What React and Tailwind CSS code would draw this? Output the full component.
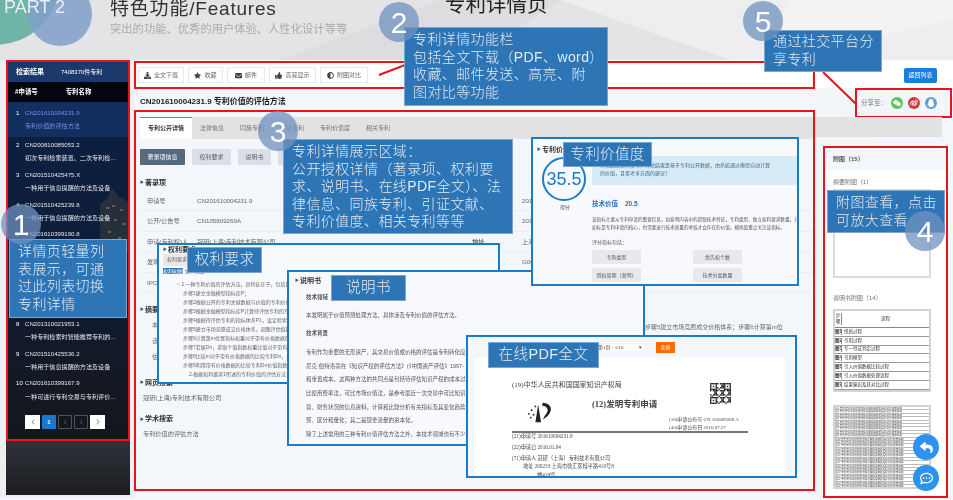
import React from "react";
import { FaDownload, FaStar, FaEnvelope, FaThumbsUp, FaAdjust, FaReply, FaRegCommentDots, FaWeixin, FaWeibo, FaQq, FaChevronLeft, FaChevronRight } from "react-icons/fa";

const results = [
    { n: 1, id: "CN201610004231.9", title: "专利价值的评估方法", active: true },
    { n: 2, id: "CN200810085053.2", title: "初次专利检索装置、二次专利检...", },
    { n: 3, id: "CN201510425475.X", title: "一种用于信息提醒的方法及设备" },
    { n: 4, id: "CN201510425239.8", title: "一种用于信息提醒的方法及设备" },
    { n: 5, id: "CN201610399190.8", title: "一种专利价值评估的方法和系统" },
    { n: 6, id: "CN201510425001.3", title: "一种用于信息提醒的方法及设备" },
    { n: 7, id: "CN201310021950.4", title: "一种专利检索方法及装置" },
    { n: 8, id: "CN201310021953.1", title: "一种专利检索时智能推荐专利的..." },
    { n: 9, id: "CN201510425536.2", title: "一种用于信息提醒的方法及设备" },
    { n: 10, id: "CN201610399167.9", title: "一种可进行专利交易与专利评价..." },
];

const tools = [
    { icon: FaDownload, label: "全文下载", w: "w-[46px]" },
    { icon: FaStar, label: "收藏", w: "w-[35px]" },
    { icon: FaEnvelope, label: "邮件", w: "w-[38px]" },
    { icon: FaThumbsUp, label: "高亮显示", w: "w-[47px]" },
    { icon: FaAdjust, label: "附图对比", w: "w-[48px]" },
];

const tabs = ["法律信息", "同族专利", "引证专利", "专利价值度", "相关专利"];

const biblio = [
    ["申请号", "CN201610004231.9", "", "2016.01.04"],
    ["公开/公告号", "CN105809269A", "", "2016.07.27"],
    ["申请(专利权)人", "冠研(上海)专利技术有限公司", "地址", "上海市徐汇区桂平路"],
    ["发明人", "王磊;李明", "", "G06Q 50/18"],
    ["IPC分类号", "G06Q 10/06", "", ""],
];

const claims = [
    "步骤1建立金融模型指标库P；",
    "步骤2根据公开的专利文献数据与价值的专利价值金额P建立专利价值评估模型；",
    "步骤3根据金融模型指标库P计算待评估专利的专利价值评分；",
    "步骤4根据待评估专利的指标体系P1，设定检索条件，从专利数据库中检索；",
    "步骤5建立市场竞愿成交价格体系，调整评估值指标权重分析比较；",
    "步骤6计算第m位置指标权重对于带有价格数据的比较专利Dn的值；",
    "步骤7若属Dn，求取个值指数权重比值对于带有价格数据的比较；",
    "步骤8比较m对于带有价格数据的比较专利Dn，找到有值指标；",
    "步骤9利用带有价格数据的比较专利Dn价值指数据为Dn，与值；",
];

const specLines = [
    "专利作为重要的无形资产，其交易价值或价格的评估是专利转化应用中的关键",
    "尼克·伯特洛蒂在《知识产权的评估方法》(《中国资产评估》1997-",
    "和重置成本。这两种方法的共同点是包括待评估知识产权的成本过程中",
    "比使用费率法，可比市场价值法，是参考最近一次交易中可比知识产权",
    "营、财务状况的信息资料，计算和比较分析有关指标及其变化趋势",
    "预、区分和量化；其二是现金流量的资本化。",
    "除了上述常用的三种专利价值评估方法之外，本技术领域也有不少研究",
];

const figureRows = ["纸质过程", "引用过程", "专一特征判定过程", "引用模型", "引入价值数据比较过程", "引入价值数据处理流程", "结果输出及其对比过程"];

// rough qr picture: finder squares in three corners, noise elsewhere
const qrOn = (x, y) => {
    const inFinder = (fx, fy) => x >= fx && x < fx + 5 && y >= fy && y < fy + 5;
    if (inFinder(0, 0) || inFinder(10, 0) || inFinder(0, 10)) {
        const lx = x % 10;
        const ly = y % 10;
        return lx === 0 || lx === 4 || ly === 0 || ly === 4 || (lx === 2 && ly === 2);
    }
    return (x * x * 7 + y * y * 13 + x * y * 5 + x + y) % 5 < 2;
};
const qrCells = [];
for (let y = 0; y < 15; y++) {
    for (let x = 0; x < 15; x++) {
        if (qrOn(x, y)) qrCells.push([x, y]);
    }
}

// blue box that explains a region of the slide
const Callout = ({ className, children }) => (
    <div className={`absolute z-30 whitespace-nowrap border border-[#7ba6d4] bg-[#2e75b6] font-light tracking-[0.4px] text-[#e3ebf4] ${className}`}>
        {children}
    </div>
);

const NumberDot = ({ className, children }) => (
    <div className={`absolute z-40 flex h-[40px] w-[40px] items-center justify-center rounded-full bg-[#6f92bf]/75 text-[30px] font-light text-white ${className}`}>
        {children}
    </div>
);

const Heading = ({ children, className = "" }) => (
    <div className={`flex items-center gap-[1px] text-[7px] font-bold text-[#333] ${className}`}>
        <span className="text-[4px] text-[#35518a]">▶</span>
        {children}
    </div>
);

const Sidebar = () => (
    <aside className="ml-[6px] h-[435px] w-[124px] shrink-0 bg-gradient-to-b from-[#202833] to-[#17191d]">
        <div className="relative h-[381px] overflow-hidden border-2 border-[#e8141c] bg-gradient-to-b from-[#0c2147] via-[#0e1d38] to-[#14161b] text-white">
            <svg className="absolute right-0 top-[120px] h-[70px] w-[34px]" viewBox="0 0 34 70">
                <path d="M6 70 L6 22 L14 16 L18 6 L24 14 L34 20 L34 70 Z" fill="#26303c" />
                <path d="M12 26 h3 M18 24 h3 M26 28 h3 M10 36 h3 M20 38 h3 M28 42 h3 M14 50 h3 M24 56 h3" stroke="#a98d4e" strokeWidth="1" />
            </svg>
            <div className="relative flex h-[20px] items-center gap-[17px] bg-[#1b3a6b] pl-[8px] text-[6px]">
                <span className="text-[7px] font-bold">检索结果</span>
                <span>7408370件专利</span>
            </div>
            <div className="relative flex h-[20px] items-center gap-[28px] bg-[#03060e] pl-[7px] text-[6.4px] font-bold">
                <span>#申请号</span>
                <span>专利名称</span>
            </div>
            {results.map((r) => (
                <div
                    key={r.n}
                    className={`relative flex gap-[3px] pl-[8px] text-[6.1px] ${r.active ? "h-[35px] bg-[#12305f] pt-[6px]" : "h-[29.8px] pt-[3px]"}`}
                >
                    <span className="w-[6px]">{r.n}</span>
                    <div className={`flex flex-col gap-[4px] ${r.active ? "text-[#7a8cf0]" : "text-[#e4e7ec]"}`}>
                        <span className="whitespace-nowrap">{r.id}</span>
                        <span className="whitespace-nowrap">{r.title}</span>
                    </div>
                </div>
            ))}
            <div className="relative mt-[10px] flex justify-center gap-[2px] pr-[6px] text-[6px]">
                <span className="flex h-[14px] w-[15px] items-center justify-center bg-white text-[#999]"><FaChevronLeft /></span>
                <span className="flex h-[14px] w-[14px] items-center justify-center rounded-[1px] bg-[#1a78d0] font-bold">1</span>
                <span className="flex h-[14px] w-[14px] items-center justify-center rounded-[1px] border border-[#555] text-[#555]">2</span>
                <span className="flex h-[14px] w-[14px] items-center justify-center rounded-[1px] border border-[#555] text-[#555]">3</span>
                <span className="flex h-[14px] w-[15px] items-center justify-center bg-white text-[#999]"><FaChevronRight /></span>
            </div>
        </div>
        <div className="h-[54px] bg-gradient-to-b from-[#2f3238] to-[#1b1d21]" />
    </aside>
);

const Toolbar = () => (
    <div className="flex h-[28px] items-center gap-[4px] border-2 border-[#e8141c] pl-[2px]">
        {tools.map((t) => (
            <div key={t.label} className={`flex h-[16px] items-center justify-center gap-[3px] border border-[#e6e8ec] bg-white text-[6px] text-[#666] ${t.w}`}>
                <t.icon className="text-[7px] text-[#444]" />
                {t.label}
            </div>
        ))}
    </div>
);

const MainPanel = () => (
    <section className="h-[381px] overflow-hidden border-2 border-[#e8141c] bg-[#f3f6fa] pl-[4px] text-[6px] text-[#666]">
        <div className="mt-[5px] flex h-[22px] items-center bg-[#e2e2e2] text-[#777]">
            <div className="flex h-full w-[52px] items-center justify-center border-t border-[#3b8fe6] bg-white font-bold text-[#333]">专利公开详情</div>
            {tabs.map((t) => (
                <span key={t} className="mx-[8px]">{t}</span>
            ))}
        </div>
        <div className="mt-[10px] flex gap-[7px]">
            <span className="flex h-[16px] w-[45px] items-center justify-center rounded-[1px] bg-[#56697f] text-white">著录项信息</span>
            <span className="flex h-[16px] w-[39px] items-center justify-center rounded-[1px] bg-[#dadee6]">权利要求</span>
            <span className="flex h-[16px] w-[33px] items-center justify-center rounded-[1px] bg-[#dadee6]">说明书</span>
            <span className="flex h-[16px] w-[40px] items-center justify-center rounded-[1px] bg-[#dadee6]">全文</span>
        </div>
        <Heading className="mt-[13px]">著录项</Heading>
        <div className="mt-[2px]">
            {biblio.map((row) => (
                <div key={row[0]} className="flex h-[20.5px] items-center border-b border-[#e9edf2] pl-[7px] text-[6.2px]">
                    <span className="w-[50px] whitespace-nowrap">{row[0]}</span>
                    <span className="w-[275px] whitespace-nowrap">{row[1]}</span>
                    <span className="w-[50px] font-bold">{row[2]}</span>
                    <span className="whitespace-nowrap">{row[3]}</span>
                </div>
            ))}
        </div>
        <Heading className="mt-[12px]">摘要</Heading>
        <div className="mt-[5px] flex flex-col gap-[7px] pl-[12px]">
            <span>本发明公开了一种专利价值的评估方法</span>
            <span>该方法包括建立金融模型指标库P</span>
            <span>估值模型的专利价值计算</span>
        </div>
        <Heading className="mt-[16px]">网页搜索</Heading>
        <p className="mt-[5px] pl-[3px] text-[6.2px]">冠研(上海)专利技术有限公司</p>
        <Heading className="mt-[12px]">学术搜索</Heading>
        <p className="mt-[4px] pl-[3px] text-[6.2px]">专利价值的评估方法</p>
    </section>
);

const RightColumn = () => (
    <div className="min-w-0 flex-1 text-[6px] text-[#777]">
        <div className="flex h-[28px] items-center justify-end bg-white pr-[16px] pt-[3px]">
            <span className="flex h-[15px] w-[33px] items-center justify-center rounded-[2px] bg-[#1a7ee0] text-white">返回列表</span>
        </div>
        <div className="ml-[40px] flex h-[30px] w-[97px] items-center gap-[4px] border-2 border-[#e8141c] pl-[4px] text-[6.5px]">
            <span className="whitespace-nowrap">分享至：</span>
            <span className="flex h-[12px] w-[12px] shrink-0 items-center justify-center rounded-full bg-[#5cc45c] text-[8px] text-white"><FaWeixin /></span>
            <span className="ml-[1px] flex h-[12px] w-[12px] shrink-0 items-center justify-center rounded-full bg-[#cc3b3b] text-[8px] text-white"><FaWeibo /></span>
            <span className="ml-[1px] flex h-[12px] w-[12px] shrink-0 items-center justify-center rounded-full bg-[#5a9fe0] text-[8px] text-white"><FaQq /></span>
        </div>
        <div className="-mt-px h-[20px] w-[127px] bg-[#e2e2e2]" />
        <div className="ml-[8px] mt-[9px] h-[352px] w-[125px] border-2 border-[#e8141c] bg-white">
            <div className="flex h-[22px] items-center bg-[#f3f6fa] pl-[8px] font-bold text-[#555]">附图（15）</div>
            <div className="pl-[8px] pr-[15px]">
                <p className="mt-[8px] leading-[9px]">摘要附图（1）</p>
                <div className="mt-[2px] h-[89px] border-2 border-[#dcdcdc]" />
                <p className="mt-[16px] leading-[9px]">说明书附图（14）</p>
                <div className="mt-[6px] flex h-[83px] flex-col overflow-hidden border-2 border-[#d4d4d4] text-[4.5px] leading-[6px] text-[#333]">
                    <div className="flex h-[17px] shrink-0 items-center border-b border-[#888]">
                        <span className="w-[7px] border-r border-[#888] text-center">步骤</span>
                        <span className="flex-1 text-center">流程</span>
                    </div>
                    {figureRows.map((r, i) => (
                        <div key={r} className="flex h-[8.8px] shrink-0 items-center overflow-hidden whitespace-nowrap border-b border-[#999]">
                            <span className="w-[7px] shrink-0 overflow-hidden border-r border-[#888] font-bold">图{i + 1}</span>
                            <span className="pl-[2px]">{r}</span>
                        </div>
                    ))}
                </div>
                <div className="mt-[13px] flex h-[84px] flex-col overflow-hidden border-2 border-[#d4d4d4]">
                    {Array.from({ length: 24 }, (_, i) => (
                        <div key={i} className="h-[3.4px] shrink-0 overflow-hidden whitespace-nowrap border-b border-[#bbb] text-[2.6px] leading-[3px] text-[#444]">
                            图{i + 1} 专利价值评估处理流程及其相关数据指标对比结果说明
                        </div>
                    ))}
                </div>
            </div>
        </div>
    </div>
);

const ClaimsWindow = () => (
    <div className="absolute left-[157px] top-[243px] z-10 h-[141px] w-[343px] overflow-hidden border-2 border-[#1a7cc8] bg-[#f7f9fc] pl-[4px] text-[5px] leading-[5px] text-[#666]">
        <Heading className="mt-[2px] text-[5px]">权利要求</Heading>
        <div className="mt-[2px] h-[12px] w-[60px] bg-[#e8e8e8] pl-[4px] pt-[3px]">权利要求树形</div>
        <p className="mt-[3px]"><span className="bg-[#2e75b6] text-white">权利树图</span> 文本视图</p>
        <div className="ml-[14px] mt-[8px] flex flex-col gap-[4px] whitespace-nowrap">
            <p>○ 1.一种专利价值的评估方法，其特征在于，包括如下步骤：</p>
            {claims.map((c) => (
                <p key={c} className="pl-[6px]">{c}</p>
            ))}
            <p className="pl-[12px]">2.根据权利要求1所述的专利价值的评估方法，其特征在于，</p>
        </div>
    </div>
);

const SpecWindow = () => (
    <div className="absolute left-[287px] top-[270px] z-10 h-[176px] w-[358px] overflow-hidden border-2 border-[#1a7cc8] bg-[#f7f9fc] pl-[6px] text-[5.5px] leading-[8px] text-[#555]">
        <Heading className="mt-[5px]">说明书</Heading>
        <p className="mt-[8px] pl-[11px] font-bold">技术领域</p>
        <p className="mt-[10px] pl-[11px]">本发明属于价值预测处理方法，具体涉及专利价值的评估方法。</p>
        <p className="mt-[10px] pl-[11px] font-bold">技术背景</p>
        <div className="mt-[11px] flex flex-col gap-[5.7px] whitespace-nowrap pl-[11px]">
            {specLines.map((l) => (
                <p key={l}>{l}</p>
            ))}
        </div>
    </div>
);

const ValueWindow = () => (
    <div className="absolute left-[531px] top-[137px] z-20 h-[149px] w-[268px] overflow-hidden border-2 border-[#1a7cc8] bg-[#f7f9fc] text-[5px] text-[#555]">
        <Heading className="ml-[4px] mt-[6px] text-[5.5px]">专利价值度</Heading>
        <div className="absolute left-[9px] top-[18px] flex h-[44px] w-[44px] items-center justify-center rounded-full border-2 border-[#1a7cc8] text-[18px] text-[#1a7cc8]">35.5</div>
        <span className="absolute left-[27px] top-[65px]">得分</span>
        <div className="absolute left-[59px] top-[17px] h-[29px] w-[207px] whitespace-nowrap bg-[#d6ebf5] px-[8px] pt-[5px] leading-[8px] text-[#3d6b94]">
            评估结果仅供参考，评估结果是基于专利公开数据，由系统通过模型自动计算
            <br />
            的价值，且参考多方面的建议！
        </div>
        <div className="absolute left-[59px] top-[60px] flex gap-[7px] text-[6.5px] font-bold text-[#2a72c4]">
            <span>技术价值</span>
            <span>20.5</span>
        </div>
        <p className="absolute left-[59px] top-[77px] whitespace-nowrap leading-[8px] text-[4.6px]">
            该指标主要从专利申请的重要信息，如发明内容中的提取技术特征，专利类型、独立权利要求数量，共
            <br />
            如标是专利申请的核心，也需要进行技术质量的考核才会存在的价值，模拟值重点关注该指标。
        </p>
        <p className="absolute left-[59px] top-[100px]">评分指标包括：</p>
        <div className="absolute left-[59px] top-[111px] grid grid-cols-[49px_49px] gap-x-[52px] gap-y-[4px] text-center leading-[14px]">
            <span className="bg-[#e8e9ec]">专利类型</span>
            <span className="bg-[#e8e9ec]">优先权个数</span>
            <span className="bg-[#e8e9ec]">授权周期（发明）</span>
            <span className="bg-[#e8e9ec]">技术分类数量</span>
        </div>
    </div>
);

const PdfWindow = () => (
    <div className="absolute left-[466px] top-[335px] z-20 h-[143px] w-[331px] overflow-hidden border-2 border-[#1a7cc8] bg-[#f4f7fb] font-['Liberation_Serif','Noto_Sans_CJK_SC',serif] text-[#444]">
        <div className="flex h-[21px] items-center justify-end gap-[12px] pr-[120px] text-[5px]">
            <span className="flex w-[48px] justify-between bg-white px-[2px]">第1页 - 1/16 <span>▾</span></span>
            <span className="flex h-[11px] w-[19px] items-center justify-center bg-[#ff6a00] text-white">全屏</span>
        </div>
        <div className="relative ml-[7px] h-[120px] w-[310px] bg-white">
            <p className="absolute left-[37px] top-[22px] text-[7px]">(19)中华人民共和国国家知识产权局</p>
            <svg className="absolute left-[52px] top-[42px] h-[24px] w-[28px]" viewBox="0 0 30 24" fill="#222">
                <path d="M12 4 L15 23 L9 23 Z" />
                <path d="M17 2 C28 3 29 13 17 20 L19 16 C24 11 23 6 16 5 Z" />
                <circle cx="2" cy="14" r="1" /><circle cx="5" cy="10" r="1" /><circle cx="7" cy="15" r="1" /><circle cx="9" cy="6" r="1" /><circle cx="4" cy="18" r="1" />
            </svg>
            <p className="absolute left-[117px] top-[40px] text-[8.5px] font-bold">(12)发明专利申请</p>
            <svg className="absolute left-[235px] top-[25px] h-[21px] w-[21px]" viewBox="0 0 15 15" fill="#222">
                {qrCells.map(([x, y]) => <rect key={`${x}-${y}`} x={x} y={y} width="1" height="1" />)}
            </svg>
            <p className="absolute left-[194px] top-[58px] whitespace-nowrap text-[5px]">(10)申请公布号 CN 105809269 A</p>
            <p className="absolute left-[194px] top-[66px] whitespace-nowrap text-[5px]">(43)申请公布日 2016.07.27</p>
            <div className="absolute left-[37px] top-[73px] h-[1.5px] w-[236px] bg-[#777]" />
            <div className="absolute left-[37px] top-[75px] flex flex-col gap-[3.2px] whitespace-nowrap text-[5.2px]">
                <p>(21)申请号 201610004231.9</p>
                <p>(22)申请日 2016.01.04</p>
                <p>(71)申请人 冠研（上海）专利技术有限公司</p>
            </div>
            <p className="absolute left-[48px] top-[105px] whitespace-nowrap text-[5.2px]">地址 200233 上海市徐汇区桂平路410号8</p>
            <p className="absolute left-[62px] top-[114px] whitespace-nowrap text-[5.2px]">幢418室</p>
        </div>
    </div>
);

const App = () => {
    return (
        <div className="relative h-[500px] w-[953px] overflow-hidden bg-[#f3f6fa] font-['Liberation_Sans','Noto_Sans_CJK_SC',sans-serif] blur-[0.4px]">
            <header className="relative h-[60px] overflow-hidden bg-[#e4e3e5]">
                <svg className="absolute inset-0 h-full w-full" viewBox="0 0 953 60">
                    <polygon points="560,0 953,0 953,60 730,60" fill="#eeedef" />
                    <polygon points="280,60 440,0 560,0 470,60" fill="#dedcdf" />
                    <polygon points="760,60 790,0 953,0 953,20" fill="#f3f3f4" />
                </svg>
                <div className="absolute -left-[70px] -top-[85px] h-[130px] w-[130px] rounded-full bg-[#6fb4a6]" />
                <div className="absolute left-[28px] -top-[18px] h-[64px] w-[64px] rounded-full bg-[#7f9fc9]/85" />
                <span className="absolute left-[4px] -top-[6px] text-[18px] font-light text-[#e9eef2]">PART 2</span>
                <div className="relative pl-[110px]">
                    <h1 className="-mt-[4px] whitespace-nowrap text-[19px] font-normal leading-[26px] tracking-[0.8px] text-[#333]">特色功能/Features</h1>
                    <p className="whitespace-nowrap text-[11.3px] leading-[14px] text-[#aaa]">突出的功能、优秀的用户体验、人性化设计等等</p>
                </div>
                <span className="absolute left-[445px] -top-[9px] whitespace-nowrap text-[20.5px] leading-[28px] text-[#222]">专利详情页</span>
            </header>

            <div className="flex bg-gradient-to-r from-[#eeeeee] to-[#f3f6fa]">
                <Sidebar />
                <div className="ml-[4px] w-[681px] shrink-0 bg-[#f3f6fa]">
                    <div className="bg-white pt-px"><Toolbar /></div>
                    <h2 className="h-[21px] whitespace-nowrap pl-[6px] pt-[8px] text-[8px] font-bold leading-[10px] text-[#222]">
                        CN201610004231.9 专利价值的评估方法
                    </h2>
                    <MainPanel />
                </div>
                <RightColumn />
            </div>

            {/* windows and callouts that lie over the page */}
            <ClaimsWindow />
            <SpecWindow />
            <ValueWindow />
            <PdfWindow />

            <p className="absolute left-[645px] top-[323px] whitespace-nowrap text-[6px] text-[#666]">步骤5建立市场竞愿成交价格体系；步骤6计算第m位</p>

            <svg className="pointer-events-none absolute inset-0 z-30 h-[500px] w-[953px]">
                <line x1="379" y1="75" x2="405" y2="65" stroke="#e8141c" strokeWidth="2" />
                <line x1="823" y1="72" x2="856" y2="104" stroke="#e8141c" strokeWidth="2" />
            </svg>

            <Callout className="left-[9px] top-[239px] h-[79px] w-[118px] pl-[8px] pt-[3px] text-[14px] leading-[17.6px]">
                详情页轻量列
                <br />
                表展示，可通
                <br />
                过此列表切换
                <br />
                专利详情
            </Callout>
            <Callout className="left-[404px] top-[27px] h-[79px] w-[204px] pl-[8px] pt-[3px] text-[14px] leading-[17.6px]">
                专利详情功能栏
                <br />
                包括全文下载（PDF、word）
                <br />
                收藏、邮件发送、高亮、附
                <br />
                图对比等功能
            </Callout>
            <Callout className="left-[283px] top-[139px] h-[95px] w-[230px] pl-[8px] pt-[3px] text-[14px] leading-[17.5px]">
                专利详情展示区域：
                <br />
                公开授权详情（著录项、权利要
                <br />
                求、说明书、在线PDF全文）、法
                <br />
                律信息、同族专利、引证文献、
                <br />
                专利价值度、相关专利等等
            </Callout>
            <Callout className="left-[764px] top-[30px] h-[42px] w-[118px] pl-[8px] pt-[2px] text-[14px] leading-[17.5px]">
                通过社交平台分
                <br />
                享专利
            </Callout>
            <Callout className="left-[827px] top-[190px] h-[43px] w-[118px] pl-[8px] pt-[3px] text-[14px] leading-[17.5px]">
                附图查看，点击
                <br />
                可放大查看
            </Callout>
            <Callout className="left-[563px] top-[142px] flex h-[25px] w-[89px] items-center justify-center text-[14.5px]">专利价值度</Callout>
            <Callout className="left-[187px] top-[247px] flex h-[26px] w-[75px] items-center justify-center text-[14.5px]">权利要求</Callout>
            <Callout className="left-[331px] top-[275px] flex h-[26px] w-[75px] items-center justify-center text-[14.5px]">说明书</Callout>
            <Callout className="left-[488px] top-[342px] flex h-[26px] w-[111px] items-center justify-center text-[14.5px]">在线PDF全文</Callout>

            <NumberDot className="left-[1px] top-[204px]">1</NumberDot>
            <NumberDot className="left-[379px] top-[2px]">2</NumberDot>
            <NumberDot className="left-[258px] top-[111px]">3</NumberDot>
            <NumberDot className="left-[905px] top-[211px]">4</NumberDot>
            <NumberDot className="left-[743px] top-[1px]">5</NumberDot>

            <button className="absolute left-[913px] top-[434px] z-40 flex h-[26px] w-[26px] items-center justify-center rounded-full bg-[#2e93ee] text-[13px] text-white"><FaReply /></button>
            <button className="absolute left-[913px] top-[465px] z-40 flex h-[26px] w-[26px] items-center justify-center rounded-full bg-[#2e93ee] text-[13px] text-white"><FaRegCommentDots /></button>
        </div>
    );
};

export default App;
